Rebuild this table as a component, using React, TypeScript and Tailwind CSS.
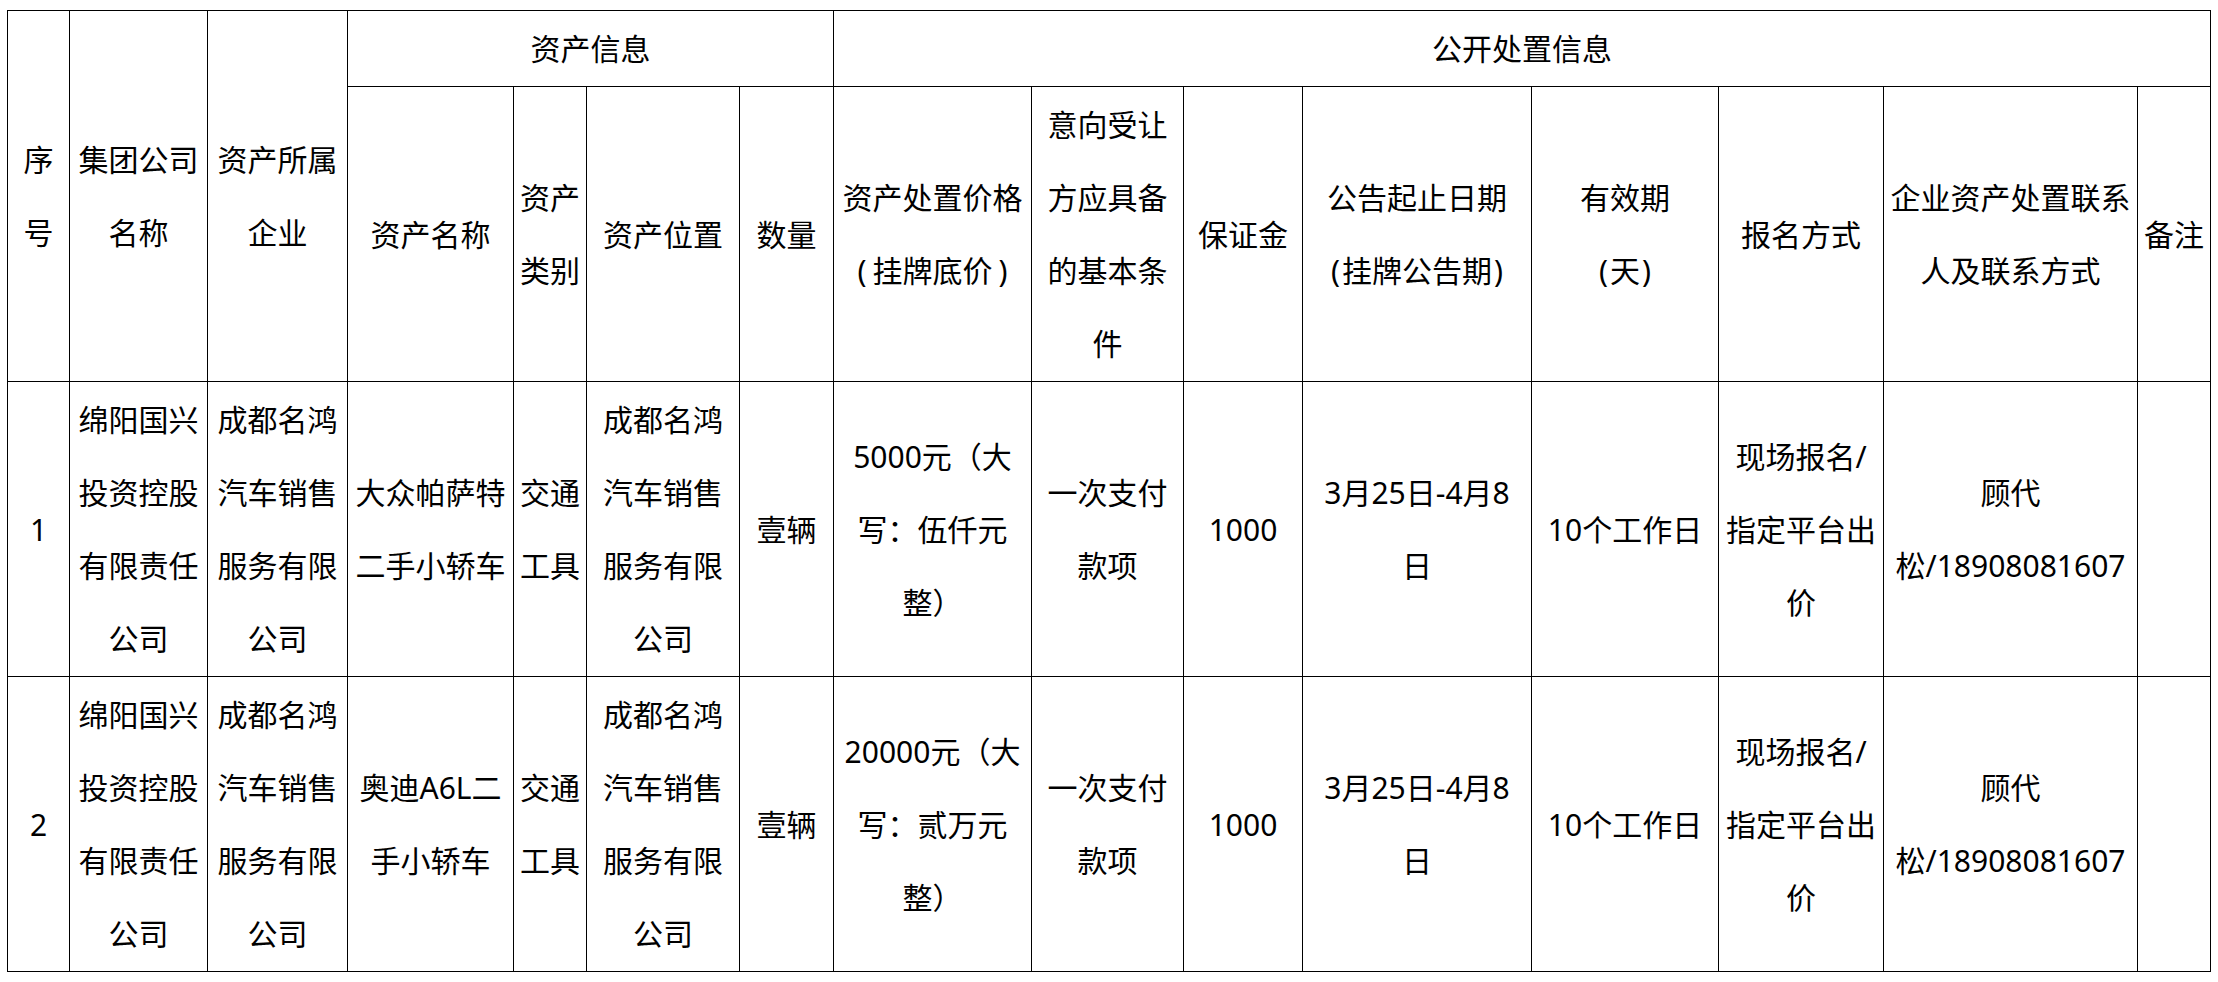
import React from "react";

type Cell = { lines: React.ReactNode[]; rowSpan?: number; colSpan?: number };

const colWidths = [62, 138, 140, 166, 73, 153, 94, 198, 152, 119, 229, 187, 165, 254, 73];

const company = ["绵阳国兴", "投资控股", "有限责任", "公司"];
const owner = ["成都名鸿", "汽车销售", "服务有限", "公司"];

const headerRow1: Cell[] = [
  { lines: ["序", "号"], rowSpan: 2 },
  { lines: ["集团公司", "名称"], rowSpan: 2 },
  { lines: ["资产所属", "企业"], rowSpan: 2 },
  { lines: ["资产信息"], colSpan: 4 },
  { lines: ["公开处置信息"], colSpan: 8 },
];

const headerRow2: Cell[] = [
  { lines: ["资产名称"] },
  { lines: ["资产", "类别"] },
  { lines: ["资产位置"] },
  { lines: ["数量"] },
  {
    lines: [
      "资产处置价格",
      <>
        <span className="mx-[6px]">(</span>挂牌底价<span className="mx-[6px]">)</span>
      </>,
    ],
  },
  { lines: ["意向受让", "方应具备", "的基本条", "件"] },
  { lines: ["保证金"] },
  {
    lines: [
      "公告起止日期",
      <>
        <span className="mx-[2px]">(</span>挂牌公告期<span className="mx-[2px]">)</span>
      </>,
    ],
  },
  {
    lines: [
      "有效期",
      <>
        <span className="mx-[2px]">(</span>天<span className="mx-[2px]">)</span>
      </>,
    ],
  },
  { lines: ["报名方式"] },
  { lines: ["企业资产处置联系", "人及联系方式"] },
  { lines: ["备注"] },
];

const bodyRows: Cell[][] = [
  [
    { lines: ["1"] },
    { lines: company },
    { lines: owner },
    { lines: ["大众帕萨特", "二手小轿车"] },
    { lines: ["交通", "工具"] },
    { lines: owner },
    { lines: ["壹辆"] },
    { lines: ["5000元（大", "写：伍仟元", "整）"] },
    { lines: ["一次支付", "款项"] },
    { lines: ["1000"] },
    { lines: ["3月25日-4月8", "日"] },
    { lines: ["10个工作日"] },
    { lines: ["现场报名/", "指定平台出", "价"] },
    { lines: ["顾代", "松/18908081607"] },
    { lines: [] },
  ],
  [
    { lines: ["2"] },
    { lines: company },
    { lines: owner },
    { lines: ["奥迪A6L二", "手小轿车"] },
    { lines: ["交通", "工具"] },
    { lines: owner },
    { lines: ["壹辆"] },
    { lines: ["20000元（大", "写：贰万元", "整）"] },
    { lines: ["一次支付", "款项"] },
    { lines: ["1000"] },
    { lines: ["3月25日-4月8", "日"] },
    { lines: ["10个工作日"] },
    { lines: ["现场报名/", "指定平台出", "价"] },
    { lines: ["顾代", "松/18908081607"] },
    { lines: [] },
  ],
];

function Td({ cell }: { cell: Cell }) {
  return (
    <td
      rowSpan={cell.rowSpan}
      colSpan={cell.colSpan}
      className="border border-black p-0 text-center align-middle overflow-visible"
    >
      {cell.lines.map((l, i) => (
        <div key={i} className="whitespace-nowrap leading-[73px]">
          {l}
        </div>
      ))}
    </td>
  );
}

export default function App() {
  return (
    <div
      className="w-[2218px] h-[982px] bg-white text-black text-[30px] pt-[10px] pl-[7px]"
      style={{ fontFamily: '"Noto Sans", "Noto Sans CJK SC", sans-serif' }}
    >
      <table className="border-collapse table-fixed w-[2204px]">
        <colgroup>
          {colWidths.map((w, i) => (
            <col key={i} style={{ width: w }} />
          ))}
        </colgroup>
        <tbody>
          <tr className="h-[76px]">
            {headerRow1.map((c, i) => (
              <Td key={i} cell={c} />
            ))}
          </tr>
          <tr className="h-[295px]">
            {headerRow2.map((c, i) => (
              <Td key={i} cell={c} />
            ))}
          </tr>
          {bodyRows.map((row, r) => (
            <tr key={r} className="h-[295px]">
              {row.map((c, i) => (
                <Td key={i} cell={c} />
              ))}
            </tr>
          ))}
        </tbody>
      </table>
    </div>
  );
}
